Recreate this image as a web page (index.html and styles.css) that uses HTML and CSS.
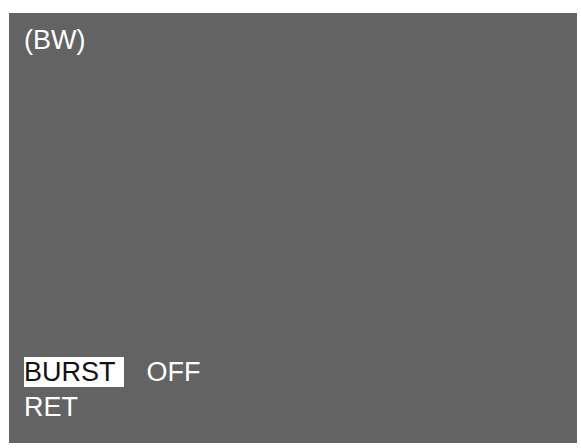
FILE: index.html
```html
<!DOCTYPE html>
<html>
<head>
<meta charset="utf-8">
<link rel="stylesheet" href="styles.css">
</head>
<body>
<div class="screen">
  <div class="top">(BW)</div>
  <div class="menu">
    <div class="row"><span class="sel">BURST</span><span class="val">OFF</span></div>
    <div class="row">RET</div>
  </div>
</div>
</body>
</html>
```
FILE: styles.css
```css
html, body {
  margin: 0;
  padding: 0;
  background: #ffffff;
}
body {
  padding: 13px 0 0 9px;
}
.screen {
  width: 568px;
  height: 430px;
  box-sizing: border-box;
  background: #636363;
  padding: 12px 15px 18px 15px;
  display: flex;
  flex-direction: column;
  justify-content: space-between;
  font-family: "Liberation Sans", Arial, sans-serif;
  font-size: 27px;
  color: #ffffff;
}
.top {
  line-height: 30px;
}
.menu {
  line-height: 35px;
}
.sel {
  background: #ffffff;
  color: #111111;
  padding-right: 8px;
}
.val {
  margin-left: 23px;
}
```
